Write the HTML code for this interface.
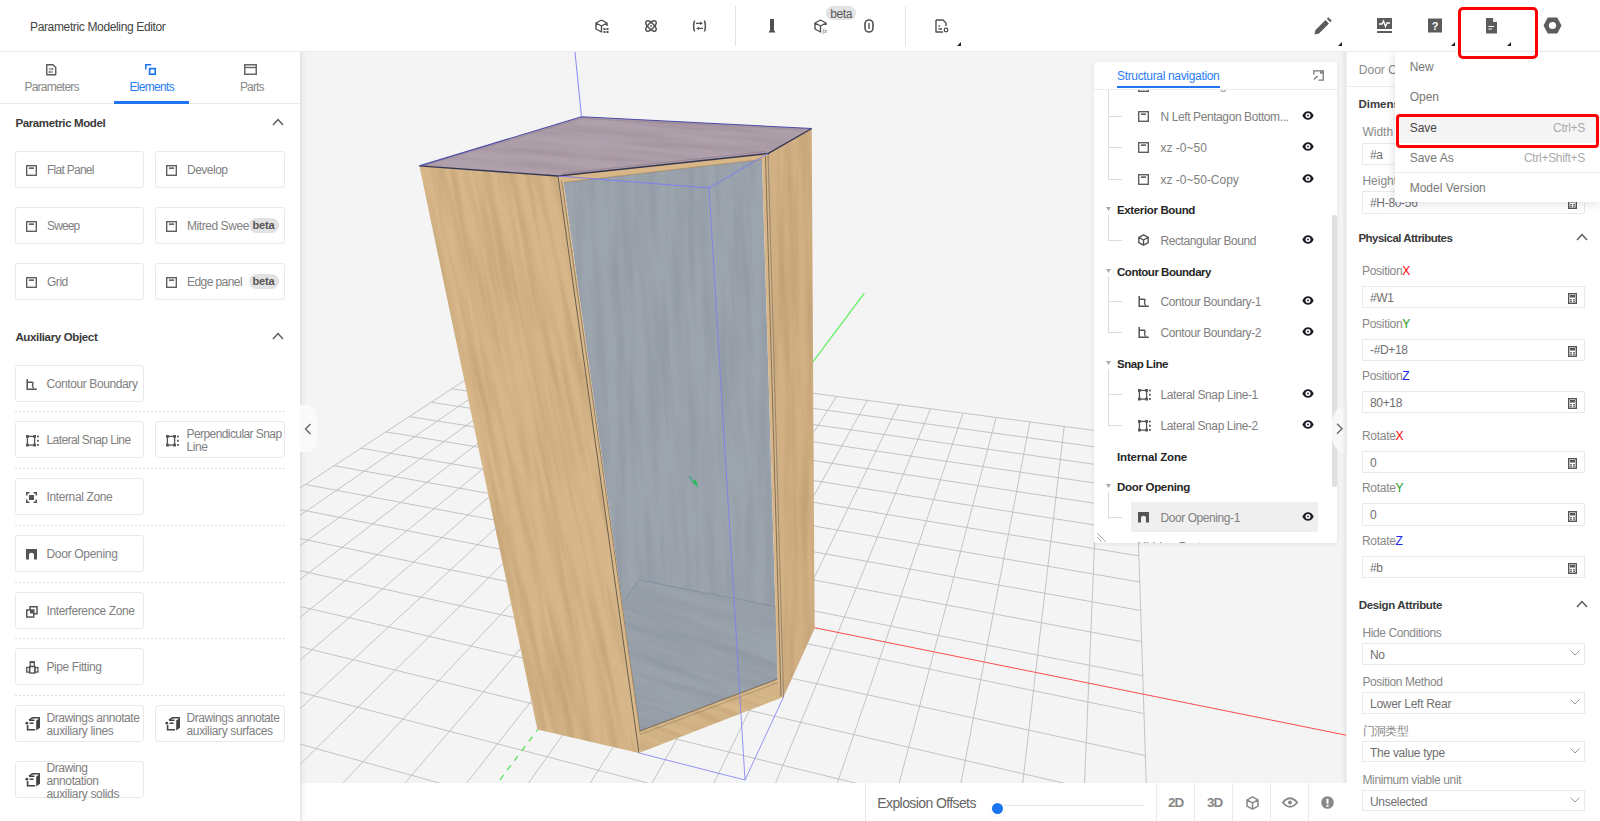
<!DOCTYPE html><html><head><meta charset="utf-8"><style>
*{margin:0;padding:0;box-sizing:border-box}
html,body{width:1600px;height:821px;overflow:hidden;background:#fff}
body{position:relative;font-family:"Liberation Sans",sans-serif}
.a{position:absolute}
.t{position:absolute;white-space:nowrap;line-height:1}
svg.a{overflow:visible}
</style></head><body><div class="a" style="left:300px;top:52px;width:1046px;height:731px;background:#f4f4f4;overflow:hidden;"></div><div class="a" style="left:300px;top:52px;width:7px;height:731px;background:linear-gradient(90deg,#dedede,#ececec 30%,#f4f4f4);"></div><svg class="a" style="left:300px;top:52px;overflow:hidden" width="1046" height="731" viewBox="300 52 1046 731"><g transform="translate(300 52)"><path d="M206.9 300.8L-630.0 847.8M231.9 304.1L-586.7 866.5M257.3 307.5L-541.6 885.9M283.1 310.9L-494.7 906.1M309.4 314.4L-445.8 927.2M336.1 317.9L-394.9 949.1M363.3 321.5L-341.7 972.0M390.9 325.2L-286.1 996.0M419.0 328.9L-228.0 1021.0M447.7 332.6L-167.1 1047.2M476.8 336.5L-103.4 1074.7M506.4 340.4L-36.5 1103.5M536.6 344.4L33.7 1133.8M567.4 348.5L107.5 1165.6M598.7 352.6L185.3 1199.1M630.5 356.8L267.3 1234.4M663.0 361.1L353.8 1271.7M696.1 365.5L445.4 1311.2M729.9 369.9L542.3 1353.0M764.2 374.5L645.2 1397.3M799.3 379.1L754.6 1444.4M835.0 383.8L871.0 1494.6M206.9 300.8L835.0 383.8M189.6 312.2L835.6 400.4M171.3 324.1L836.2 418.2M151.9 336.8L836.8 437.2M131.2 350.3L837.4 457.8M109.3 364.6L838.2 479.9M85.9 379.9L838.9 503.9M60.9 396.2L839.8 530.0M34.2 413.7L840.7 558.5M5.5 432.5L841.7 589.6M-25.4 452.6L842.8 623.8M-58.7 474.4L844.0 661.6M-94.7 498.0L845.4 703.6M-133.8 523.5L846.9 750.4M-176.4 551.4L848.6 803.1M-223.0 581.8L850.6 862.7M-274.2 615.3L852.8 930.8M-330.7 652.2L855.3 1009.2M-393.3 693.1L858.3 1100.5M-463.1 738.7L861.8 1208.3M-541.5 789.9L865.9 1337.3M-630.0 847.8L871.0 1494.6" stroke="#bdbdbd" stroke-width="0.9" fill="none"/><path d="M340.3 540.5L1459.3 766.7" stroke="#ff3b3b" stroke-width="0.9"/><path d="M340.3 540.5L564.4 241.1" stroke="#55ee55" stroke-width="1.1"/><path d="M340.3 540.5L148.6 796.5" stroke="#44dd44" stroke-width="1.1" stroke-dasharray="6 6"/><defs><filter id="fwv" x="0" y="0" width="1" height="1" color-interpolation-filters="sRGB"><feTurbulence type="fractalNoise" baseFrequency="0.12 0.007" numOctaves="3" seed="4"/><feColorMatrix type="matrix" values="0 0 0 0 0.52  0 0 0 0 0.40  0 0 0 0 0.24  1.6 0 0 0 -0.62"/></filter><filter id="fgv" x="0" y="0" width="1" height="1" color-interpolation-filters="sRGB"><feTurbulence type="fractalNoise" baseFrequency="0.10 0.008" numOctaves="3" seed="9"/><feColorMatrix type="matrix" values="0 0 0 0 0.40  0 0 0 0 0.44  0 0 0 0 0.50  1.6 0 0 0 -0.62"/></filter><filter id="fmv" x="0" y="0" width="1" height="1" color-interpolation-filters="sRGB"><feTurbulence type="fractalNoise" baseFrequency="0.15 0.01" numOctaves="3" seed="2"/><feColorMatrix type="matrix" values="0 0 0 0 0.45  0 0 0 0 0.38  0 0 0 0 0.43  1.6 0 0 0 -0.62"/></filter></defs><polygon points="263.5,130.5 462,107.5 477.6,627 340,679" fill="#9ca4ae" /><clipPath id="ci"><polygon points="263.5,130.5 462,107.5 477.6,627 340,679"/></clipPath><g clip-path="url(#ci)"><g transform="rotate(-3 370.6 393.2)"><rect x="-86.7" y="-64.0" width="914.4" height="914.4" filter="url(#fgv)" opacity="0.25"/></g></g><polygon points="323,550 339,528 476,554.5 477.6,627 340,679" fill="#9aa2ac" /><clipPath id="cf"><polygon points="323,550 339,528 476,554.5 477.6,627 340,679"/></clipPath><g clip-path="url(#cf)"><g transform="rotate(-71 400.3 603.5)"><rect x="276.6" y="479.8" width="247.4" height="247.4" filter="url(#fgv)" opacity="0.25"/></g></g><path d="M323.0 550.0 L339.0 528.0 L476.0 554.5" fill="none" stroke="#7f8a99" stroke-width="0.7" /><polygon points="119.39999999999998,113.9 258,124 339,701 237.39999999999998,677.4" fill="#d7b789" /><clipPath id="cl"><polygon points="119.39999999999998,113.9 258,124 339,701 237.39999999999998,677.4"/></clipPath><g clip-path="url(#cl)"><g transform="rotate(-11.8 229.2 407.4)"><rect x="-240.5" y="-62.2" width="939.4" height="939.4" filter="url(#fwv)" opacity="0.28"/></g></g><polygon points="258,124 263.5,130.5 340,679 341,696 339,701" fill="#d9b98a" /><path d="M258.0 124.0 L339.0 701.0" fill="none" stroke="#5e5040" stroke-width="0.9" /><path d="M261.5 128.0 L340.5 683.0" fill="none" stroke="#6a5a48" stroke-width="0.6" /><polygon points="340,679 477.6,627 483.5,645 339,701" fill="#d8b98b" /><clipPath id="cp"><polygon points="340,679 477.6,627 483.5,645 339,701"/></clipPath><g clip-path="url(#cp)"><g transform="rotate(-69 411.2 664.0)"><rect x="295.6" y="548.4" width="231.2" height="231.2" filter="url(#fwv)" opacity="0.25"/></g></g><path d="M340.0 679.0 L477.6 627.0" fill="none" stroke="#6a5a48" stroke-width="0.8" /><path d="M340.0 682.5 L478.0 630.5" fill="none" stroke="#8a7458" stroke-width="0.5" /><polygon points="511.70000000000005,76.5 468,101.5 483.5,645 514.6,576.6" fill="#d1b084" /><clipPath id="cr"><polygon points="511.70000000000005,76.5 468,101.5 483.5,645 514.6,576.6"/></clipPath><g clip-path="url(#cr)"><g transform="rotate(-1.2 491.3 360.8)"><rect x="36.5" y="-94.1" width="909.6" height="909.6" filter="url(#fwv)" opacity="0.28"/></g></g><polygon points="462,107.5 468,101.5 483.5,645 477.6,627" fill="#d7b789" /><path d="M465.5 104.0 L481.0 644.0" fill="none" stroke="#5e5040" stroke-width="0.7" /><path d="M468.0 101.5 L483.5 645.0" fill="none" stroke="#6a5a48" stroke-width="0.6" /><polygon points="119.39999999999998,113.9 281.5,64.7 511.70000000000005,76.5 468,101.5 258,124" fill="#afa0ab" /><clipPath id="ct"><polygon points="119.39999999999998,113.9 281.5,64.7 511.70000000000005,76.5 468,101.5 258,124"/></clipPath><g clip-path="url(#ct)"><g transform="rotate(-85 315.6 94.3)"><rect x="1.7" y="-219.5" width="627.7" height="627.7" filter="url(#fmv)" opacity="0.25"/></g></g><path d="M124.0 113.5 L282.0 66.5 L504.0 77.5" fill="none" stroke="#9a8894" stroke-width="0.7" /><path d="M262.0 121.5 L465.0 99.5" fill="none" stroke="#8f7d8b" stroke-width="0.7" /><polygon points="258,124 468,101.5 462,107.5 263.5,130.5" fill="#d8b687" /><path d="M263.5 130.5 L462.0 107.5" fill="none" stroke="#8a7458" stroke-width="0.6" /><path d="M119.4 113.9 L258.0 124.0 L468.0 101.5 L511.7 76.5" fill="none" stroke="#343650" stroke-width="1.4" /><path d="M119.4 113.9 L281.5 64.7 L511.7 76.5" fill="none" stroke="#4a4aa8" stroke-width="1.1" /><path d="M275.0 0.0 L281.5 64.7" fill="none" stroke="#7b7bf8" stroke-width="0.9" /><path d="M258.0 124.0 L409.0 136.0 L468.0 101.5" fill="none" stroke="#7b7bf8" stroke-width="0.9" /><path d="M409.0 136.0 L445.0 728.0" fill="none" stroke="#7b7bf8" stroke-width="0.8" /><path d="M339.0 701.0 L445.0 728.0 L483.5 645.0" fill="none" stroke="#7b7bf8" stroke-width="0.8" /><path d="M389.0 424.0 L394.0 431.0" fill="none" stroke="#33aa77" stroke-width="1.2" /><path d="M392 429 L398 436 L396 428Z" fill="#22bb55"/></g></svg><div class="a" style="left:1094px;top:62px;width:243px;height:481px;background:#fff;box-shadow:0 1px 4px rgba(0,0,0,0.08);border-radius:2px;overflow:hidden;"></div><div class="t" style="left:1117.0px;top:70px;font-size:12px;color:#2a7cf2;letter-spacing:-0.333px;">Structural navigation</div><div class="a" style="left:1117px;top:86px;width:102.5px;height:2px;background:#1f75f0;"></div><div class="a" style="left:1094px;top:89px;width:244px;height:1px;background:#ececec;"></div><svg class="a" style="left:1313px;top:70px;" width="11" height="11" viewBox="0 0 11 11"><path d="M0.8 4.5 V0.8 H10.2 V10.2 H5.5" fill="none" stroke="#777" stroke-width="1.3"/><rect x="7" y="0.8" width="3.2" height="3" fill="#888"/><path d="M1.3 9 L4.3 6.5" stroke="#777" stroke-width="1.4" stroke-linecap="round"/></svg><div class="a" style="left:1108px;top:90px;width:1px;height:89px;background:#dcdcdc;"></div><div class="a" style="left:1108px;top:116px;width:14px;height:1px;background:#dcdcdc;"></div><div class="a" style="left:1108px;top:147px;width:14px;height:1px;background:#dcdcdc;"></div><div class="a" style="left:1108px;top:179px;width:14px;height:1px;background:#dcdcdc;"></div><div class="a" style="left:1131px;top:502px;width:187px;height:30px;background:#efefef;"></div><svg class="a" style="left:1138px;top:111px;" width="11" height="11" viewBox="0 0 11 11"><rect x="0.7" y="0.7" width="9.6" height="9.6" fill="none" stroke="#5a5a5a" stroke-width="1.35"/><rect x="3" y="2.4" width="5" height="1.5" fill="#555"/></svg><div class="t" style="left:1160.5px;top:111px;font-size:12px;color:#808080;letter-spacing:-0.403px;">N Left Pentagon Bottom...</div><svg class="a" style="left:1301.5px;top:111.0px;" width="12" height="9" viewBox="0 0 12 9"><path d="M0.3 4.5 Q2.5 0.2 6 0.2 Q9.5 0.2 11.7 4.5 Q9.5 8.8 6 8.8 Q2.5 8.8 0.3 4.5Z" fill="#1c1c26"/><circle cx="6" cy="4.5" r="2.5" fill="#fff"/><circle cx="6" cy="4.5" r="0.9" fill="#1c1c26"/></svg><svg class="a" style="left:1138px;top:142px;" width="11" height="11" viewBox="0 0 11 11"><rect x="0.7" y="0.7" width="9.6" height="9.6" fill="none" stroke="#5a5a5a" stroke-width="1.35"/><rect x="3" y="2.4" width="5" height="1.5" fill="#555"/></svg><div class="t" style="left:1160.5px;top:142px;font-size:12px;color:#808080;">xz -0~50</div><svg class="a" style="left:1301.5px;top:142.0px;" width="12" height="9" viewBox="0 0 12 9"><path d="M0.3 4.5 Q2.5 0.2 6 0.2 Q9.5 0.2 11.7 4.5 Q9.5 8.8 6 8.8 Q2.5 8.8 0.3 4.5Z" fill="#1c1c26"/><circle cx="6" cy="4.5" r="2.5" fill="#fff"/><circle cx="6" cy="4.5" r="0.9" fill="#1c1c26"/></svg><svg class="a" style="left:1138px;top:174px;" width="11" height="11" viewBox="0 0 11 11"><rect x="0.7" y="0.7" width="9.6" height="9.6" fill="none" stroke="#5a5a5a" stroke-width="1.35"/><rect x="3" y="2.4" width="5" height="1.5" fill="#555"/></svg><div class="t" style="left:1160.5px;top:174px;font-size:12px;color:#808080;">xz -0~50-Copy</div><svg class="a" style="left:1301.5px;top:174.0px;" width="12" height="9" viewBox="0 0 12 9"><path d="M0.3 4.5 Q2.5 0.2 6 0.2 Q9.5 0.2 11.7 4.5 Q9.5 8.8 6 8.8 Q2.5 8.8 0.3 4.5Z" fill="#1c1c26"/><circle cx="6" cy="4.5" r="2.5" fill="#fff"/><circle cx="6" cy="4.5" r="0.9" fill="#1c1c26"/></svg><svg class="a" style="left:1106px;top:207px;" width="5" height="4" viewBox="0 0 5 4"><path d="M0 0 H5 L2.5 4Z" fill="#aaa"/></svg><div class="a" style="left:1108px;top:215px;width:1px;height:25px;background:#dcdcdc;"></div><div class="a" style="left:1108px;top:240px;width:14px;height:1px;background:#dcdcdc;"></div><div class="t" style="left:1117.0px;top:205px;font-size:11.5px;color:#262626;font-weight:700;letter-spacing:-0.361px;">Exterior Bound</div><svg class="a" style="left:1138px;top:234px;" width="11" height="12" viewBox="0 0 11 12"><path d="M5.5 0.8 L10.2 3.4 V8.6 L5.5 11.2 L0.8 8.6 V3.4Z M0.8 3.4 L5.5 6 L10.2 3.4 M5.5 6 V11.2" fill="none" stroke="#555" stroke-width="1.4" stroke-linejoin="round"/></svg><div class="t" style="left:1160.5px;top:235px;font-size:12px;color:#808080;letter-spacing:-0.423px;">Rectangular Bound</div><svg class="a" style="left:1301.5px;top:235.0px;" width="12" height="9" viewBox="0 0 12 9"><path d="M0.3 4.5 Q2.5 0.2 6 0.2 Q9.5 0.2 11.7 4.5 Q9.5 8.8 6 8.8 Q2.5 8.8 0.3 4.5Z" fill="#1c1c26"/><circle cx="6" cy="4.5" r="2.5" fill="#fff"/><circle cx="6" cy="4.5" r="0.9" fill="#1c1c26"/></svg><svg class="a" style="left:1106px;top:269px;" width="5" height="4" viewBox="0 0 5 4"><path d="M0 0 H5 L2.5 4Z" fill="#aaa"/></svg><div class="a" style="left:1108px;top:277px;width:1px;height:55px;background:#dcdcdc;"></div><div class="a" style="left:1108px;top:301px;width:14px;height:1px;background:#dcdcdc;"></div><div class="a" style="left:1108px;top:332px;width:14px;height:1px;background:#dcdcdc;"></div><div class="t" style="left:1117.0px;top:267px;font-size:11.5px;color:#262626;font-weight:700;letter-spacing:-0.473px;">Contour Boundary</div><svg class="a" style="left:1138px;top:296px;" width="12" height="11" viewBox="0 0 12 11"><path d="M1.2 0 V10.2 H10.8" fill="none" stroke="#555" stroke-width="1.5"/><path d="M1.2 3.2 H6.2 Q7.6 3.4 6.6 5.6 Q6 7.2 7.6 9.6" fill="none" stroke="#555" stroke-width="1.4"/></svg><div class="t" style="left:1160.5px;top:296px;font-size:12px;color:#808080;letter-spacing:-0.420px;">Contour Boundary-1</div><svg class="a" style="left:1301.5px;top:296.0px;" width="12" height="9" viewBox="0 0 12 9"><path d="M0.3 4.5 Q2.5 0.2 6 0.2 Q9.5 0.2 11.7 4.5 Q9.5 8.8 6 8.8 Q2.5 8.8 0.3 4.5Z" fill="#1c1c26"/><circle cx="6" cy="4.5" r="2.5" fill="#fff"/><circle cx="6" cy="4.5" r="0.9" fill="#1c1c26"/></svg><svg class="a" style="left:1138px;top:327px;" width="12" height="11" viewBox="0 0 12 11"><path d="M1.2 0 V10.2 H10.8" fill="none" stroke="#555" stroke-width="1.5"/><path d="M1.2 3.2 H6.2 Q7.6 3.4 6.6 5.6 Q6 7.2 7.6 9.6" fill="none" stroke="#555" stroke-width="1.4"/></svg><div class="t" style="left:1160.5px;top:327px;font-size:12px;color:#808080;letter-spacing:-0.420px;">Contour Boundary-2</div><svg class="a" style="left:1301.5px;top:327.0px;" width="12" height="9" viewBox="0 0 12 9"><path d="M0.3 4.5 Q2.5 0.2 6 0.2 Q9.5 0.2 11.7 4.5 Q9.5 8.8 6 8.8 Q2.5 8.8 0.3 4.5Z" fill="#1c1c26"/><circle cx="6" cy="4.5" r="2.5" fill="#fff"/><circle cx="6" cy="4.5" r="0.9" fill="#1c1c26"/></svg><svg class="a" style="left:1106px;top:361px;" width="5" height="4" viewBox="0 0 5 4"><path d="M0 0 H5 L2.5 4Z" fill="#aaa"/></svg><div class="a" style="left:1108px;top:369px;width:1px;height:56px;background:#dcdcdc;"></div><div class="a" style="left:1108px;top:394px;width:14px;height:1px;background:#dcdcdc;"></div><div class="a" style="left:1108px;top:425px;width:14px;height:1px;background:#dcdcdc;"></div><div class="t" style="left:1117.0px;top:359px;font-size:11.5px;color:#262626;font-weight:700;letter-spacing:-0.439px;">Snap Line</div><svg class="a" style="left:1138px;top:389px;" width="13" height="12" viewBox="0 0 13 12"><rect x="1.4" y="1.4" width="7.2" height="8.7" fill="none" stroke="#555" stroke-width="1.3"/><rect x="0" y="0" width="2.8" height="2.8" fill="#555"/><rect x="7.2" y="0" width="2.8" height="2.8" fill="#555"/><rect x="0" y="8.7" width="2.8" height="2.8" fill="#555"/><rect x="7.2" y="8.7" width="2.8" height="2.8" fill="#555"/><rect x="11" y="0.6" width="1.8" height="1.8" fill="#555"/><rect x="11" y="4.8" width="1.8" height="1.8" fill="#555"/><rect x="11" y="9" width="1.8" height="1.8" fill="#555"/></svg><div class="t" style="left:1160.5px;top:389px;font-size:12px;color:#808080;letter-spacing:-0.386px;">Lateral Snap Line-1</div><svg class="a" style="left:1301.5px;top:389.0px;" width="12" height="9" viewBox="0 0 12 9"><path d="M0.3 4.5 Q2.5 0.2 6 0.2 Q9.5 0.2 11.7 4.5 Q9.5 8.8 6 8.8 Q2.5 8.8 0.3 4.5Z" fill="#1c1c26"/><circle cx="6" cy="4.5" r="2.5" fill="#fff"/><circle cx="6" cy="4.5" r="0.9" fill="#1c1c26"/></svg><svg class="a" style="left:1138px;top:420px;" width="13" height="12" viewBox="0 0 13 12"><rect x="1.4" y="1.4" width="7.2" height="8.7" fill="none" stroke="#555" stroke-width="1.3"/><rect x="0" y="0" width="2.8" height="2.8" fill="#555"/><rect x="7.2" y="0" width="2.8" height="2.8" fill="#555"/><rect x="0" y="8.7" width="2.8" height="2.8" fill="#555"/><rect x="7.2" y="8.7" width="2.8" height="2.8" fill="#555"/><rect x="11" y="0.6" width="1.8" height="1.8" fill="#555"/><rect x="11" y="4.8" width="1.8" height="1.8" fill="#555"/><rect x="11" y="9" width="1.8" height="1.8" fill="#555"/></svg><div class="t" style="left:1160.5px;top:420px;font-size:12px;color:#808080;letter-spacing:-0.386px;">Lateral Snap Line-2</div><svg class="a" style="left:1301.5px;top:420.0px;" width="12" height="9" viewBox="0 0 12 9"><path d="M0.3 4.5 Q2.5 0.2 6 0.2 Q9.5 0.2 11.7 4.5 Q9.5 8.8 6 8.8 Q2.5 8.8 0.3 4.5Z" fill="#1c1c26"/><circle cx="6" cy="4.5" r="2.5" fill="#fff"/><circle cx="6" cy="4.5" r="0.9" fill="#1c1c26"/></svg><div class="t" style="left:1117.0px;top:452px;font-size:11.5px;color:#262626;font-weight:700;letter-spacing:-0.169px;">Internal Zone</div><svg class="a" style="left:1106px;top:484px;" width="5" height="4" viewBox="0 0 5 4"><path d="M0 0 H5 L2.5 4Z" fill="#aaa"/></svg><div class="a" style="left:1108px;top:492px;width:1px;height:25px;background:#dcdcdc;"></div><div class="a" style="left:1108px;top:517px;width:14px;height:1px;background:#dcdcdc;"></div><div class="t" style="left:1117.0px;top:482px;font-size:11.5px;color:#262626;font-weight:700;letter-spacing:-0.305px;">Door Opening</div><svg class="a" style="left:1138px;top:512px;" width="11" height="11" viewBox="0 0 11 11"><path d="M0 0 H11 V10.5 H8 V5.5 Q8 3.7 5.5 3.7 Q3 3.7 3 5.5 V10.5 H0Z" fill="#555"/></svg><div class="t" style="left:1160.5px;top:512px;font-size:12px;color:#808080;letter-spacing:-0.427px;">Door Opening-1</div><svg class="a" style="left:1301.5px;top:512.0px;" width="12" height="9" viewBox="0 0 12 9"><path d="M0.3 4.5 Q2.5 0.2 6 0.2 Q9.5 0.2 11.7 4.5 Q9.5 8.8 6 8.8 Q2.5 8.8 0.3 4.5Z" fill="#1c1c26"/><circle cx="6" cy="4.5" r="2.5" fill="#fff"/><circle cx="6" cy="4.5" r="0.9" fill="#1c1c26"/></svg><div class="a" style="left:1094px;top:541px;width:244px;height:2px;overflow:hidden"><div class="t" style="left:43.5px;top:0px;font-size:12px;color:#808080;">Hidden Part</div></div><div class="a" style="left:1094px;top:90px;width:243px;height:4px;overflow:hidden"><svg class="a" style="left:44px;top:-9px;" width="11" height="11" viewBox="0 0 11 11"><rect x="0.7" y="0.7" width="9.6" height="9.6" fill="none" stroke="#5a5a5a" stroke-width="1.35"/><rect x="3" y="2.4" width="5" height="1.5" fill="#555"/></svg><div class="t" style="left:126.0px;top:-11px;font-size:12px;color:#909090;">g</div></div><div class="a" style="left:1332px;top:215px;width:5px;height:272px;background:#e0e0e0;border-radius:2px;"></div><svg class="a" style="left:1096px;top:532px;" width="10" height="10" viewBox="0 0 10 10"><path d="M1 5 L6 10 M1 1 L10 10" stroke="#aaa" stroke-width="1"/></svg><div class="a" style="left:300px;top:405px;width:17px;height:47px;background:#fafafa;border-radius:0 10px 10px 0;"></div><svg class="a" style="left:304px;top:423px;" width="8" height="12" viewBox="0 0 8 12"><path d="M6.5 1 L1.5 6 L6.5 11" fill="none" stroke="#666" stroke-width="1.4"/></svg><div class="a" style="left:1332px;top:404.5px;width:15px;height:49px;background:#f8f8f8;border-radius:16px 0 0 16px/20px 0 0 20px;"></div><svg class="a" style="left:1336px;top:422.5px;" width="7" height="12" viewBox="0 0 7 12"><path d="M1 0.8 L6 5.8 L1 10.8" fill="none" stroke="#666" stroke-width="1.3"/></svg><div class="a" style="left:1341px;top:52px;width:6px;height:731px;background:linear-gradient(90deg,rgba(0,0,0,0),rgba(0,0,0,0.07));"></div><div class="a" style="left:300px;top:783px;width:1047px;height:38px;background:#fff;"></div><div class="a" style="left:300px;top:783px;width:6px;height:38px;background:linear-gradient(90deg,#e2e2e2,#f6f6f6 40%,#fff);"></div><div class="a" style="left:865px;top:783px;width:1px;height:38px;background:#e8e8e8;"></div><div class="t" style="left:877.3px;top:796px;font-size:14px;color:#666;letter-spacing:-0.599px;">Explosion Offsets</div><div class="a" style="left:997px;top:804.5px;width:148px;height:1.5px;background:#e6e6e6;"></div><div class="a" style="left:991.5px;top:802.5px;width:11px;height:11px;background:#1a73f0;border-radius:50%;box-shadow:0 0 0 2px #fff,0 1px 3px rgba(0,0,0,0.25);"></div><div class="a" style="left:1156px;top:783px;width:1px;height:38px;background:#ececec;"></div><div class="a" style="left:1194px;top:783px;width:1px;height:38px;background:#ececec;"></div><div class="a" style="left:1232px;top:783px;width:1px;height:38px;background:#ececec;"></div><div class="a" style="left:1270px;top:783px;width:1px;height:38px;background:#ececec;"></div><div class="a" style="left:1308px;top:783px;width:1px;height:38px;background:#ececec;"></div><div class="t" style="left:1168.0px;top:796px;font-size:13.5px;color:#888;font-weight:700;letter-spacing:-1.129px;">2D</div><div class="t" style="left:1207.0px;top:796px;font-size:13.5px;color:#888;font-weight:700;letter-spacing:-1.129px;">3D</div><svg class="a" style="left:1246px;top:796px;" width="13" height="14" viewBox="0 0 13 14"><path d="M6.5 0.8 L12 3.8 V10.2 L6.5 13.2 L1 10.2 V3.8Z M1 3.8 L6.5 6.8 L12 3.8 M6.5 6.8 V13.2" fill="none" stroke="#888" stroke-width="1.5" stroke-linejoin="round"/></svg><svg class="a" style="left:1282px;top:797px;" width="16" height="11" viewBox="0 0 16 11"><path d="M0.8 5.5 Q8 -3 15.2 5.5 Q8 14 0.8 5.5Z" fill="none" stroke="#888" stroke-width="1.8"/><circle cx="8" cy="5.5" r="2" fill="#888"/></svg><svg class="a" style="left:1321px;top:796px;" width="13" height="13" viewBox="0 0 13 13"><circle cx="6.5" cy="6.5" r="6.3" fill="#888"/><rect x="5.5" y="2.8" width="2" height="5" fill="#fff"/><rect x="5.5" y="8.8" width="2" height="2" fill="#fff"/></svg><div class="a" style="left:0px;top:52px;width:300px;height:769px;background:#fff;"></div><svg class="a" style="left:45.5px;top:63.5px;" width="11" height="12" viewBox="0 0 11 12"><path d="M0.75 0.75 H7 L9.75 3.5 V10.75 H0.75Z" fill="none" stroke="#5a5a5a" stroke-width="1.4" stroke-linejoin="round"/><path d="M2.8 5 H7.2 M2.8 8 H7.2" stroke="#666" stroke-width="1"/><path d="M5.5 4 L7.2 5 L5.5 6 M4.5 7 L2.8 8 L4.5 9" fill="none" stroke="#666" stroke-width="0.8"/></svg><div class="t" style="left:24.4px;top:81px;font-size:12px;color:#888;letter-spacing:-0.762px;">Parameters</div><svg class="a" style="left:145px;top:64px;" width="11" height="11" viewBox="0 0 11 11"><path d="M0.8 5.5 V0.8 H6.2" fill="none" stroke="#1f75f0" stroke-width="1.5"/><rect x="4.6" y="4.6" width="5.6" height="5.6" fill="none" stroke="#1f75f0" stroke-width="1.7"/></svg><div class="t" style="left:129.4px;top:81px;font-size:12px;color:#2a7cf2;letter-spacing:-0.678px;">Elements</div><svg class="a" style="left:244px;top:64px;" width="13" height="11" viewBox="0 0 13 11"><rect x="0.75" y="0.75" width="11.5" height="9.5" fill="none" stroke="#666" stroke-width="1.5"/><path d="M0.75 3.5 H12.25" stroke="#666" stroke-width="1.4"/></svg><div class="t" style="left:240.0px;top:81px;font-size:12px;color:#888;letter-spacing:-0.882px;">Parts</div><div class="a" style="left:0px;top:103px;width:300px;height:1px;background:#ebebeb;"></div><div class="a" style="left:114px;top:101px;width:75px;height:2.5px;background:#1f75f0;"></div><div class="t" style="left:15.4px;top:118px;font-size:11.5px;color:#3a3a3a;font-weight:700;letter-spacing:-0.367px;">Parametric Model</div><svg class="a" style="left:272px;top:118px;" width="12" height="8" viewBox="0 0 12 8"><path d="M1 7 L6 1.5 L11 7" fill="none" stroke="#555" stroke-width="1.3"/></svg><div class="a" style="left:15px;top:151px;width:129px;height:37px;border:1px solid #e9e9e9;border-radius:3px;background:#fff;"></div><svg class="a" style="left:26px;top:164.5px;" width="11" height="11" viewBox="0 0 11 11"><rect x="0.7" y="0.7" width="9.6" height="9.6" fill="none" stroke="#5a5a5a" stroke-width="1.35"/><rect x="3" y="2.4" width="5" height="1.5" fill="#555"/></svg><div class="t" style="left:47.0px;top:164px;font-size:12px;color:#808080;letter-spacing:-0.733px;">Flat Panel</div><div class="a" style="left:155px;top:151px;width:130px;height:37px;border:1px solid #e9e9e9;border-radius:3px;background:#fff;"></div><svg class="a" style="left:166px;top:164.5px;" width="11" height="11" viewBox="0 0 11 11"><rect x="0.7" y="0.7" width="9.6" height="9.6" fill="none" stroke="#5a5a5a" stroke-width="1.35"/><rect x="3" y="2.4" width="5" height="1.5" fill="#555"/></svg><div class="t" style="left:187.0px;top:164px;font-size:12px;color:#808080;letter-spacing:-0.504px;">Develop</div><div class="a" style="left:15px;top:207px;width:129px;height:37px;border:1px solid #e9e9e9;border-radius:3px;background:#fff;"></div><svg class="a" style="left:26px;top:220.5px;" width="11" height="11" viewBox="0 0 11 11"><rect x="0.7" y="0.7" width="9.6" height="9.6" fill="none" stroke="#5a5a5a" stroke-width="1.35"/><rect x="3" y="2.4" width="5" height="1.5" fill="#555"/></svg><div class="t" style="left:47.0px;top:220px;font-size:12px;color:#808080;letter-spacing:-0.878px;">Sweep</div><div class="a" style="left:155px;top:207px;width:130px;height:37px;border:1px solid #e9e9e9;border-radius:3px;background:#fff;"></div><svg class="a" style="left:166px;top:220.5px;" width="11" height="11" viewBox="0 0 11 11"><rect x="0.7" y="0.7" width="9.6" height="9.6" fill="none" stroke="#5a5a5a" stroke-width="1.35"/><rect x="3" y="2.4" width="5" height="1.5" fill="#555"/></svg><div class="t" style="left:187.0px;top:220px;font-size:12px;color:#808080;letter-spacing:-0.436px;">Mitred Swee</div><div class="a" style="left:249px;top:218px;width:29.5px;height:15px;background:#e2e2e2;border-radius:7.5px;"></div><div class="t" style="left:252.5px;top:220px;font-size:11px;color:#555;font-weight:700;letter-spacing:-0.154px;">beta</div><div class="a" style="left:15px;top:263px;width:129px;height:37px;border:1px solid #e9e9e9;border-radius:3px;background:#fff;"></div><svg class="a" style="left:26px;top:276.5px;" width="11" height="11" viewBox="0 0 11 11"><rect x="0.7" y="0.7" width="9.6" height="9.6" fill="none" stroke="#5a5a5a" stroke-width="1.35"/><rect x="3" y="2.4" width="5" height="1.5" fill="#555"/></svg><div class="t" style="left:47.0px;top:276px;font-size:12px;color:#808080;letter-spacing:-0.468px;">Grid</div><div class="a" style="left:155px;top:263px;width:130px;height:37px;border:1px solid #e9e9e9;border-radius:3px;background:#fff;"></div><svg class="a" style="left:166px;top:276.5px;" width="11" height="11" viewBox="0 0 11 11"><rect x="0.7" y="0.7" width="9.6" height="9.6" fill="none" stroke="#5a5a5a" stroke-width="1.35"/><rect x="3" y="2.4" width="5" height="1.5" fill="#555"/></svg><div class="t" style="left:187.0px;top:276px;font-size:12px;color:#808080;letter-spacing:-0.572px;">Edge panel</div><div class="a" style="left:249px;top:274px;width:29.5px;height:15px;background:#e2e2e2;border-radius:7.5px;"></div><div class="t" style="left:252.5px;top:276px;font-size:11px;color:#555;font-weight:700;letter-spacing:-0.154px;">beta</div><div class="t" style="left:15.4px;top:332px;font-size:11.5px;color:#3a3a3a;font-weight:700;letter-spacing:-0.347px;">Auxiliary Object</div><svg class="a" style="left:272px;top:332px;" width="12" height="8" viewBox="0 0 12 8"><path d="M1 7 L6 1.5 L11 7" fill="none" stroke="#555" stroke-width="1.3"/></svg><div class="a" style="left:15px;top:365px;width:129px;height:37px;border:1px solid #e9e9e9;border-radius:3px;background:#fff;"></div><svg class="a" style="left:26px;top:379px;" width="12" height="11" viewBox="0 0 12 11"><path d="M1.2 0 V10.2 H10.8" fill="none" stroke="#555" stroke-width="1.5"/><path d="M1.2 3.2 H6.2 Q7.6 3.4 6.6 5.6 Q6 7.2 7.6 9.6" fill="none" stroke="#555" stroke-width="1.4"/></svg><div class="t" style="left:46.5px;top:378px;font-size:12px;color:#808080;letter-spacing:-0.400px;">Contour Boundary</div><div class="a" style="left:15px;top:421px;width:129px;height:37px;border:1px solid #e9e9e9;border-radius:3px;background:#fff;"></div><svg class="a" style="left:26px;top:435px;" width="13" height="12" viewBox="0 0 13 12"><rect x="1.4" y="1.4" width="7.2" height="8.7" fill="none" stroke="#555" stroke-width="1.3"/><rect x="0" y="0" width="2.8" height="2.8" fill="#555"/><rect x="7.2" y="0" width="2.8" height="2.8" fill="#555"/><rect x="0" y="8.7" width="2.8" height="2.8" fill="#555"/><rect x="7.2" y="8.7" width="2.8" height="2.8" fill="#555"/><rect x="11" y="0.6" width="1.8" height="1.8" fill="#555"/><rect x="11" y="4.8" width="1.8" height="1.8" fill="#555"/><rect x="11" y="9" width="1.8" height="1.8" fill="#555"/></svg><div class="t" style="left:46.5px;top:434px;font-size:12px;color:#808080;letter-spacing:-0.592px;">Lateral Snap Line</div><div class="a" style="left:155px;top:421px;width:130px;height:37px;border:1px solid #e9e9e9;border-radius:3px;background:#fff;"></div><svg class="a" style="left:166px;top:435px;" width="13" height="12" viewBox="0 0 13 12"><rect x="1.4" y="1.4" width="7.2" height="8.7" fill="none" stroke="#555" stroke-width="1.3"/><rect x="0" y="0" width="2.8" height="2.8" fill="#555"/><rect x="7.2" y="0" width="2.8" height="2.8" fill="#555"/><rect x="0" y="8.7" width="2.8" height="2.8" fill="#555"/><rect x="7.2" y="8.7" width="2.8" height="2.8" fill="#555"/><rect x="11" y="0.6" width="1.8" height="1.8" fill="#555"/><rect x="11" y="4.8" width="1.8" height="1.8" fill="#555"/><rect x="11" y="9" width="1.8" height="1.8" fill="#555"/></svg><div class="t" style="left:186.5px;top:428px;font-size:12px;color:#808080;letter-spacing:-0.578px;">Perpendicular Snap</div><div class="t" style="left:186.5px;top:441px;font-size:12px;color:#808080;letter-spacing:-0.397px;">Line</div><div class="a" style="left:15px;top:478px;width:129px;height:37px;border:1px solid #e9e9e9;border-radius:3px;background:#fff;"></div><svg class="a" style="left:26px;top:492px;" width="11" height="11" viewBox="0 0 11 11"><path d="M0.75 3.5 V0.75 H3.5 M7.5 0.75 H10.25 V3.5 M10.25 7.5 V10.25 H7.5 M3.5 10.25 H0.75 V7.5" fill="none" stroke="#555" stroke-width="1.5"/><rect x="3" y="3" width="5" height="5" fill="#555"/></svg><div class="t" style="left:46.5px;top:491px;font-size:12px;color:#808080;letter-spacing:-0.378px;">Internal Zone</div><div class="a" style="left:15px;top:535px;width:129px;height:37px;border:1px solid #e9e9e9;border-radius:3px;background:#fff;"></div><svg class="a" style="left:26px;top:549px;" width="11" height="11" viewBox="0 0 11 11"><path d="M0 0 H11 V10.5 H8 V5.5 Q8 3.7 5.5 3.7 Q3 3.7 3 5.5 V10.5 H0Z" fill="#555"/></svg><div class="t" style="left:46.5px;top:548px;font-size:12px;color:#808080;letter-spacing:-0.309px;">Door Opening</div><div class="a" style="left:15px;top:592px;width:129px;height:37px;border:1px solid #e9e9e9;border-radius:3px;background:#fff;"></div><svg class="a" style="left:26px;top:606px;" width="12" height="12" viewBox="0 0 12 12"><rect x="4" y="0.75" width="7" height="7" fill="none" stroke="#555" stroke-width="1.5"/><rect x="0.75" y="4" width="7" height="7" fill="#fff" stroke="#555" stroke-width="1.5"/><rect x="4" y="4" width="3.5" height="3.5" fill="#555"/></svg><div class="t" style="left:46.5px;top:605px;font-size:12px;color:#808080;letter-spacing:-0.395px;">Interference Zone</div><div class="a" style="left:15px;top:648px;width:129px;height:37px;border:1px solid #e9e9e9;border-radius:3px;background:#fff;"></div><svg class="a" style="left:25.5px;top:660.5px;" width="13" height="13" viewBox="0 0 13 13"><path d="M3.5 0.8 H9" stroke="#555" stroke-width="1.5"/><rect x="4.3" y="1.5" width="4" height="4" fill="none" stroke="#555" stroke-width="1.3"/><rect x="3.6" y="5.5" width="5.4" height="6.5" fill="none" stroke="#555" stroke-width="1.4"/><rect x="0.7" y="6.5" width="2.9" height="4.6" fill="none" stroke="#555" stroke-width="1.3"/><rect x="9" y="6.5" width="2.9" height="4.6" fill="none" stroke="#555" stroke-width="1.3"/></svg><div class="t" style="left:46.5px;top:661px;font-size:12px;color:#808080;letter-spacing:-0.419px;">Pipe Fitting</div><div class="a" style="left:15px;top:705px;width:129px;height:37px;border:1px solid #e9e9e9;border-radius:3px;background:#fff;"></div><svg class="a" style="left:24.5px;top:717px;" width="16" height="14" viewBox="0 0 16 14"><path d="M4 3.2 L7.5 0.8 H15" fill="none" stroke="#444" stroke-width="1.4"/><path d="M11.2 3.5 L15 0.8 V10.8 L11.2 13.5Z" fill="#444"/><path d="M4 3.2 H9.5 M2.6 8 V12.8 H10" fill="none" stroke="#444" stroke-width="1.6"/><circle cx="1.8" cy="6.2" r="1.4" fill="#444"/><path d="M4.5 6.2 H8.5" stroke="#444" stroke-width="1.5"/></svg><div class="t" style="left:46.5px;top:712px;font-size:12px;color:#808080;letter-spacing:-0.412px;">Drawings annotate</div><div class="t" style="left:46.5px;top:725px;font-size:12px;color:#808080;letter-spacing:-0.336px;">auxiliary lines</div><div class="a" style="left:155px;top:705px;width:130px;height:37px;border:1px solid #e9e9e9;border-radius:3px;background:#fff;"></div><svg class="a" style="left:164.5px;top:717px;" width="16" height="14" viewBox="0 0 16 14"><path d="M4 3.2 L7.5 0.8 H15" fill="none" stroke="#444" stroke-width="1.4"/><path d="M11.2 3.5 L15 0.8 V10.8 L11.2 13.5Z" fill="#444"/><path d="M4 3.2 H9.5 M2.6 8 V12.8 H10" fill="none" stroke="#444" stroke-width="1.6"/><circle cx="1.8" cy="6.2" r="1.4" fill="#444"/><path d="M4.5 6.2 H8.5" stroke="#444" stroke-width="1.5"/></svg><div class="t" style="left:186.5px;top:712px;font-size:12px;color:#808080;letter-spacing:-0.412px;">Drawings annotate</div><div class="t" style="left:186.5px;top:725px;font-size:12px;color:#808080;letter-spacing:-0.360px;">auxiliary surfaces</div><div class="a" style="left:15px;top:761px;width:129px;height:37px;border:1px solid #e9e9e9;border-radius:3px;background:#fff;"></div><svg class="a" style="left:24.5px;top:773px;" width="16" height="14" viewBox="0 0 16 14"><path d="M4 3.2 L7.5 0.8 H15" fill="none" stroke="#444" stroke-width="1.4"/><path d="M11.2 3.5 L15 0.8 V10.8 L11.2 13.5Z" fill="#444"/><path d="M4 3.2 H9.5 M2.6 8 V12.8 H10" fill="none" stroke="#444" stroke-width="1.6"/><circle cx="1.8" cy="6.2" r="1.4" fill="#444"/><path d="M4.5 6.2 H8.5" stroke="#444" stroke-width="1.5"/></svg><div class="t" style="left:46.5px;top:762px;font-size:12px;color:#808080;letter-spacing:-0.440px;">Drawing</div><div class="t" style="left:46.5px;top:775px;font-size:12px;color:#808080;letter-spacing:-0.392px;">annotation</div><div class="t" style="left:46.5px;top:788px;font-size:12px;color:#808080;letter-spacing:-0.341px;">auxiliary solids</div><div class="a" style="left:15px;top:411px;width:270px;height:1px;background:repeating-linear-gradient(90deg,#dedede 0 2px,transparent 2px 4px);"></div><div class="a" style="left:15px;top:468px;width:270px;height:1px;background:repeating-linear-gradient(90deg,#dedede 0 2px,transparent 2px 4px);"></div><div class="a" style="left:15px;top:525px;width:270px;height:1px;background:repeating-linear-gradient(90deg,#dedede 0 2px,transparent 2px 4px);"></div><div class="a" style="left:15px;top:582px;width:270px;height:1px;background:repeating-linear-gradient(90deg,#dedede 0 2px,transparent 2px 4px);"></div><div class="a" style="left:15px;top:638px;width:270px;height:1px;background:repeating-linear-gradient(90deg,#dedede 0 2px,transparent 2px 4px);"></div><div class="a" style="left:15px;top:695px;width:270px;height:1px;background:repeating-linear-gradient(90deg,#dedede 0 2px,transparent 2px 4px);"></div><div class="a" style="left:0px;top:0px;width:1600px;height:52px;background:#fff;"></div><div class="a" style="left:0px;top:51px;width:1600px;height:1px;background:#ececec;"></div><div class="t" style="left:30.0px;top:21px;font-size:12px;color:#444;letter-spacing:-0.355px;">Parametric Modeling Editor</div><svg class="a" style="left:595px;top:19px;" width="15" height="15" viewBox="0 0 15 15"><path d="M6.5 1 L12 4 L12 7 M6.5 1 L1 4 L1 10 L6.5 13 L6.5 7 L1 4 M6.5 7 L12 4" fill="none" stroke="#505050" stroke-width="1.4" stroke-linejoin="round"/><rect x="8.5" y="9" width="2" height="2" fill="#505050"/><rect x="11.5" y="9" width="2" height="2" fill="#505050"/><rect x="8.5" y="12" width="2" height="2" fill="#505050"/><rect x="11.5" y="12" width="2" height="2" fill="#505050"/></svg><svg class="a" style="left:645px;top:20px;" width="12" height="12" viewBox="0 0 12 12"><ellipse cx="6" cy="6" rx="6.6" ry="2.9" transform="rotate(45 6 6)" fill="none" stroke="#505050" stroke-width="1.5"/><ellipse cx="6" cy="6" rx="6.6" ry="2.9" transform="rotate(-45 6 6)" fill="none" stroke="#505050" stroke-width="1.5"/><circle cx="6" cy="6" r="0.9" fill="#505050"/></svg><svg class="a" style="left:692px;top:20px;" width="15" height="12" viewBox="0 0 15 12"><path d="M2.6 0.4 Q0.6 6 2.6 11.6 M12.4 0.4 Q14.4 6 12.4 11.6" fill="none" stroke="#505050" stroke-width="1.5"/><path d="M4 3.3 H9 M6 8.4 H11" stroke="#505050" stroke-width="1.3"/><path d="M8 1.6 L11 3.3 L8 5Z M7 6.7 L4 8.4 L7 10.1Z" fill="#505050"/></svg><div class="a" style="left:735px;top:6px;width:1px;height:40px;background:#e5e5e5;"></div><div class="a" style="left:905px;top:6px;width:1px;height:40px;background:#e5e5e5;"></div><svg class="a" style="left:768px;top:19px;" width="8" height="14" viewBox="0 0 8 14"><path d="M2 0 H6 V11 L7.5 13.5 H0.5 L2 11Z" fill="#505050"/></svg><svg class="a" style="left:814px;top:19px;" width="15" height="15" viewBox="0 0 15 15"><path d="M6.5 1 L12 4 L12 6 M6.5 1 L1 4 L1 10 L6.5 13 L6.5 7 L1 4 M6.5 7 L12 4" fill="none" stroke="#505050" stroke-width="1.4" stroke-linejoin="round"/><text x="8.5" y="14" font-size="6" font-style="italic" fill="#505050" font-family="Liberation Serif">fx</text></svg><div class="a" style="left:826px;top:6px;width:30px;height:14px;background:#e3e3e3;border-radius:7px;"></div><div class="t" style="left:830.3px;top:8px;font-size:12px;color:#5a5a5a;letter-spacing:-0.414px;">beta</div><svg class="a" style="left:864px;top:19px;" width="10" height="14" viewBox="0 0 10 14"><rect x="1" y="1" width="8" height="12" rx="4" fill="none" stroke="#505050" stroke-width="1.6"/><path d="M5 4 V10" stroke="#505050" stroke-width="1.4"/></svg><svg class="a" style="left:935px;top:19px;" width="14" height="14" viewBox="0 0 14 14"><path d="M1 1 H8 L11 4 V7 M1 1 V13 H8" fill="none" stroke="#505050" stroke-width="1.4" stroke-linejoin="round"/><path d="M3.5 7 H5 M3.5 10 H7" stroke="#505050" stroke-width="1.3"/><circle cx="11" cy="11" r="1.8" fill="none" stroke="#505050" stroke-width="1.3"/></svg><svg class="a" style="left:957px;top:42px;" width="4" height="4" viewBox="0 0 4 4"><path d="M4 0 V4 H0Z" fill="#222"/></svg><svg class="a" style="left:1314px;top:17px;" width="18" height="18" viewBox="0 0 18 18"><path d="M0.5 17.5 L1.5 13 L11.5 3 L15 6.5 L5 16.5Z M12.8 1.7 L14.3 0.2 L17.8 3.7 L16.3 5.2Z" fill="#5c5c5c"/></svg><svg class="a" style="left:1338px;top:42px;" width="4" height="4" viewBox="0 0 4 4"><path d="M4 0 V4 H0Z" fill="#222"/></svg><svg class="a" style="left:1377px;top:18px;" width="16" height="16" viewBox="0 0 16 16"><rect x="0" y="0" width="15" height="11" fill="#5c5c5c"/><path d="M2 6 H5 L6.5 3 L8.5 8.5 L10 5 H13" fill="none" stroke="#fff" stroke-width="1.3"/><rect x="0" y="13" width="15" height="2" fill="#5c5c5c"/></svg><svg class="a" style="left:1428px;top:18px;" width="15" height="15" viewBox="0 0 15 15"><rect x="0" y="0.5" width="14" height="14" fill="#5c5c5c"/><text x="7" y="12" font-size="11" font-weight="700" fill="#fff" text-anchor="middle" font-family="Liberation Sans">?</text></svg><svg class="a" style="left:1451px;top:42px;" width="4" height="4" viewBox="0 0 4 4"><path d="M4 0 V4 H0Z" fill="#222"/></svg><svg class="a" style="left:1486px;top:18px;" width="12" height="16" viewBox="0 0 12 16"><path d="M0 0 H7.5 L11 3.5 V15.5 H0Z" fill="#5c5c5c"/><path d="M7.5 0 V3.5 H11" fill="#fff" stroke="#fff" stroke-width="0.8"/><path d="M2.5 8.5 H8 M2.5 11 H6" stroke="#fff" stroke-width="1.2"/></svg><svg class="a" style="left:1507px;top:42px;" width="4" height="4" viewBox="0 0 4 4"><path d="M4 0 V4 H0Z" fill="#222"/></svg><svg class="a" style="left:1543px;top:17px;" width="19" height="17" viewBox="0 0 19 17"><path d="M4.75 0.5 H14.25 L18.5 8.5 L14.25 16.5 H4.75 L0.5 8.5Z" fill="#5c5c5c"/><circle cx="9.5" cy="8.5" r="3.6" fill="#fff"/></svg><div class="a" style="left:1347px;top:52px;width:253px;height:769px;background:#fff;"></div><div class="t" style="left:1358.8px;top:64px;font-size:12px;color:#888;">Door Opening</div><div class="a" style="left:1347px;top:86px;width:253px;height:1px;background:#ececec;"></div><div class="t" style="left:1358.4px;top:99px;font-size:11.5px;color:#3a3a3a;font-weight:700;">Dimensions</div><div class="t" style="left:1362.4px;top:126px;font-size:12px;color:#888;">Width</div><div class="a" style="left:1362px;top:143px;width:223px;height:21.5px;border:1px solid #e9e9e9;background:#fff;"></div><div class="t" style="left:1370.0px;top:149px;font-size:12px;color:#707070;letter-spacing:-0.334px;">#a</div><svg class="a" style="left:1568.3px;top:149.75px;" width="9" height="11" viewBox="0 0 9 11"><rect x="0.7" y="0.7" width="7.6" height="9.6" fill="none" stroke="#555" stroke-width="1.4"/><rect x="2" y="2" width="5" height="2.5" fill="#555"/><rect x="2" y="6" width="2" height="1.5" fill="#777"/><rect x="5" y="6" width="2" height="1.5" fill="#777"/><rect x="2" y="8" width="2" height="1.2" fill="#777"/><rect x="5" y="8" width="2" height="1.2" fill="#777"/></svg><div class="t" style="left:1362.4px;top:175px;font-size:12px;color:#888;">Height</div><div class="a" style="left:1362px;top:191px;width:223px;height:22.5px;border:1px solid #e9e9e9;background:#fff;"></div><div class="t" style="left:1370.0px;top:197px;font-size:12px;color:#707070;letter-spacing:-0.313px;">#H-80-56</div><svg class="a" style="left:1568.3px;top:198.25px;" width="9" height="11" viewBox="0 0 9 11"><rect x="0.7" y="0.7" width="7.6" height="9.6" fill="none" stroke="#555" stroke-width="1.4"/><rect x="2" y="2" width="5" height="2.5" fill="#555"/><rect x="2" y="6" width="2" height="1.5" fill="#777"/><rect x="5" y="6" width="2" height="1.5" fill="#777"/><rect x="2" y="8" width="2" height="1.2" fill="#777"/><rect x="5" y="8" width="2" height="1.2" fill="#777"/></svg><div class="t" style="left:1358.4px;top:233px;font-size:11.5px;color:#3a3a3a;font-weight:700;letter-spacing:-0.513px;">Physical Attributes</div><svg class="a" style="left:1576px;top:233px;" width="12" height="8" viewBox="0 0 12 8"><path d="M1 7 L6 1.5 L11 7" fill="none" stroke="#555" stroke-width="1.3"/></svg><div class="t" style="left:1362px;top:265px;font-size:12px;color:#888;letter-spacing:-0.3px">Position<span style="color:#f00">X</span></div><div class="a" style="left:1362px;top:285.5px;width:223px;height:22.5px;border:1px solid #e9e9e9;background:#fff;"></div><div class="t" style="left:1370.0px;top:292px;font-size:12px;color:#707070;letter-spacing:-0.411px;">#W1</div><svg class="a" style="left:1568.3px;top:292.75px;" width="9" height="11" viewBox="0 0 9 11"><rect x="0.7" y="0.7" width="7.6" height="9.6" fill="none" stroke="#555" stroke-width="1.4"/><rect x="2" y="2" width="5" height="2.5" fill="#555"/><rect x="2" y="6" width="2" height="1.5" fill="#777"/><rect x="5" y="6" width="2" height="1.5" fill="#777"/><rect x="2" y="8" width="2" height="1.2" fill="#777"/><rect x="5" y="8" width="2" height="1.2" fill="#777"/></svg><div class="t" style="left:1362px;top:318px;font-size:12px;color:#888;letter-spacing:-0.3px">Position<span style="color:#1a9a1a">Y</span></div><div class="a" style="left:1362px;top:338.5px;width:223px;height:22.0px;border:1px solid #e9e9e9;background:#fff;"></div><div class="t" style="left:1370.0px;top:344px;font-size:12px;color:#707070;letter-spacing:-0.331px;">-#D+18</div><svg class="a" style="left:1568.3px;top:345.5px;" width="9" height="11" viewBox="0 0 9 11"><rect x="0.7" y="0.7" width="7.6" height="9.6" fill="none" stroke="#555" stroke-width="1.4"/><rect x="2" y="2" width="5" height="2.5" fill="#555"/><rect x="2" y="6" width="2" height="1.5" fill="#777"/><rect x="5" y="6" width="2" height="1.5" fill="#777"/><rect x="2" y="8" width="2" height="1.2" fill="#777"/><rect x="5" y="8" width="2" height="1.2" fill="#777"/></svg><div class="t" style="left:1362px;top:370px;font-size:12px;color:#888;letter-spacing:-0.3px">Position<span style="color:#2222ee">Z</span></div><div class="a" style="left:1362px;top:391px;width:223px;height:21.69999999999999px;border:1px solid #e9e9e9;background:#fff;"></div><div class="t" style="left:1370.0px;top:397px;font-size:12px;color:#707070;letter-spacing:-0.337px;">80+18</div><svg class="a" style="left:1568.3px;top:397.85px;" width="9" height="11" viewBox="0 0 9 11"><rect x="0.7" y="0.7" width="7.6" height="9.6" fill="none" stroke="#555" stroke-width="1.4"/><rect x="2" y="2" width="5" height="2.5" fill="#555"/><rect x="2" y="6" width="2" height="1.5" fill="#777"/><rect x="5" y="6" width="2" height="1.5" fill="#777"/><rect x="2" y="8" width="2" height="1.2" fill="#777"/><rect x="5" y="8" width="2" height="1.2" fill="#777"/></svg><div class="t" style="left:1362px;top:430px;font-size:12px;color:#888;letter-spacing:-0.3px">Rotate<span style="color:#f00">X</span></div><div class="a" style="left:1362px;top:451px;width:223px;height:21.69999999999999px;border:1px solid #e9e9e9;background:#fff;"></div><div class="t" style="left:1370.0px;top:457px;font-size:12px;color:#707070;">0</div><svg class="a" style="left:1568.3px;top:457.85px;" width="9" height="11" viewBox="0 0 9 11"><rect x="0.7" y="0.7" width="7.6" height="9.6" fill="none" stroke="#555" stroke-width="1.4"/><rect x="2" y="2" width="5" height="2.5" fill="#555"/><rect x="2" y="6" width="2" height="1.5" fill="#777"/><rect x="5" y="6" width="2" height="1.5" fill="#777"/><rect x="2" y="8" width="2" height="1.2" fill="#777"/><rect x="5" y="8" width="2" height="1.2" fill="#777"/></svg><div class="t" style="left:1362px;top:482px;font-size:12px;color:#888;letter-spacing:-0.3px">Rotate<span style="color:#1a9a1a">Y</span></div><div class="a" style="left:1362px;top:503.4px;width:223px;height:22.300000000000068px;border:1px solid #e9e9e9;background:#fff;"></div><div class="t" style="left:1370.0px;top:509px;font-size:12px;color:#707070;">0</div><svg class="a" style="left:1568.3px;top:510.54999999999995px;" width="9" height="11" viewBox="0 0 9 11"><rect x="0.7" y="0.7" width="7.6" height="9.6" fill="none" stroke="#555" stroke-width="1.4"/><rect x="2" y="2" width="5" height="2.5" fill="#555"/><rect x="2" y="6" width="2" height="1.5" fill="#777"/><rect x="5" y="6" width="2" height="1.5" fill="#777"/><rect x="2" y="8" width="2" height="1.2" fill="#777"/><rect x="5" y="8" width="2" height="1.2" fill="#777"/></svg><div class="t" style="left:1362px;top:535px;font-size:12px;color:#888;letter-spacing:-0.3px">Rotate<span style="color:#2222ee">Z</span></div><div class="a" style="left:1362px;top:556px;width:223px;height:21.600000000000023px;border:1px solid #e9e9e9;background:#fff;"></div><div class="t" style="left:1370.0px;top:562px;font-size:12px;color:#707070;letter-spacing:-0.334px;">#b</div><svg class="a" style="left:1568.3px;top:562.8px;" width="9" height="11" viewBox="0 0 9 11"><rect x="0.7" y="0.7" width="7.6" height="9.6" fill="none" stroke="#555" stroke-width="1.4"/><rect x="2" y="2" width="5" height="2.5" fill="#555"/><rect x="2" y="6" width="2" height="1.5" fill="#777"/><rect x="5" y="6" width="2" height="1.5" fill="#777"/><rect x="2" y="8" width="2" height="1.2" fill="#777"/><rect x="5" y="8" width="2" height="1.2" fill="#777"/></svg><div class="t" style="left:1358.7px;top:600px;font-size:11.5px;color:#3a3a3a;font-weight:700;letter-spacing:-0.357px;">Design Attribute</div><svg class="a" style="left:1576px;top:600px;" width="12" height="8" viewBox="0 0 12 8"><path d="M1 7 L6 1.5 L11 7" fill="none" stroke="#555" stroke-width="1.3"/></svg><div class="t" style="left:1362.5px;top:627px;font-size:12px;color:#888;letter-spacing:-0.395px;">Hide Conditions</div><div class="a" style="left:1362px;top:643.4px;width:223px;height:21.899999999999977px;border:1px solid #e9e9e9;background:#fff;"></div><div class="t" style="left:1370.0px;top:649px;font-size:12px;color:#707070;letter-spacing:-0.383px;">No</div><svg class="a" style="left:1570px;top:650.3499999999999px;" width="10" height="6" viewBox="0 0 10 6"><path d="M0.5 0.5 L5 5 L9.5 0.5" fill="none" stroke="#999" stroke-width="1"/></svg><div class="t" style="left:1362.5px;top:676px;font-size:12px;color:#888;letter-spacing:-0.402px;">Position Method</div><div class="a" style="left:1362px;top:692.3px;width:223px;height:21.700000000000045px;border:1px solid #e9e9e9;background:#fff;"></div><div class="t" style="left:1370.0px;top:698px;font-size:12px;color:#707070;letter-spacing:-0.285px;">Lower Left Rear</div><svg class="a" style="left:1570px;top:699.15px;" width="10" height="6" viewBox="0 0 10 6"><path d="M0.5 0.5 L5 5 L9.5 0.5" fill="none" stroke="#999" stroke-width="1"/></svg><div class="t" style="left:1362.5px;top:725px;font-size:12px;color:#888;letter-spacing:-0.630px;">门洞类型</div><div class="a" style="left:1362px;top:741px;width:223px;height:21.399999999999977px;border:1px solid #e9e9e9;background:#fff;"></div><div class="t" style="left:1370.0px;top:747px;font-size:12px;color:#707070;letter-spacing:-0.281px;">The value type</div><svg class="a" style="left:1570px;top:747.7px;" width="10" height="6" viewBox="0 0 10 6"><path d="M0.5 0.5 L5 5 L9.5 0.5" fill="none" stroke="#999" stroke-width="1"/></svg><div class="t" style="left:1362.5px;top:774px;font-size:12px;color:#888;letter-spacing:-0.391px;">Minimum viable unit</div><div class="a" style="left:1362px;top:790px;width:223px;height:21.299999999999955px;border:1px solid #e9e9e9;background:#fff;"></div><div class="t" style="left:1370.0px;top:796px;font-size:12px;color:#707070;letter-spacing:-0.300px;">Unselected</div><svg class="a" style="left:1570px;top:796.65px;" width="10" height="6" viewBox="0 0 10 6"><path d="M0.5 0.5 L5 5 L9.5 0.5" fill="none" stroke="#999" stroke-width="1"/></svg><div class="a" style="left:1395px;top:52px;width:205px;height:150px;background:#fff;box-shadow:-2px 3px 8px rgba(0,0,0,0.10);"></div><div class="a" style="left:1396px;top:115px;width:204px;height:28px;background:#f5f5f5;"></div><div class="a" style="left:1395px;top:172px;width:205px;height:1px;background:#ececec;"></div><div class="t" style="left:1409.7px;top:61px;font-size:12px;color:#777;">New</div><div class="t" style="left:1409.7px;top:91px;font-size:12px;color:#777;">Open</div><div class="t" style="left:1409.7px;top:122px;font-size:12px;color:#444;">Save</div><div class="t" style="left:1553.0px;top:122px;font-size:12px;color:#aaa;letter-spacing:-0.279px;">Ctrl+S</div><div class="t" style="left:1409.7px;top:152px;font-size:12px;color:#777;">Save As</div><div class="t" style="left:1524.0px;top:152px;font-size:12px;color:#aaa;letter-spacing:-0.308px;">Ctrl+Shift+S</div><div class="t" style="left:1409.7px;top:182px;font-size:12px;color:#777;">Model Version</div><div class="a" style="left:1458px;top:6.5px;width:80px;height:52px;border:3px solid #f00;border-radius:5px;"></div><div class="a" style="left:1396px;top:114px;width:203px;height:33.5px;border:3px solid #f00;border-radius:4px;"></div></body></html>
